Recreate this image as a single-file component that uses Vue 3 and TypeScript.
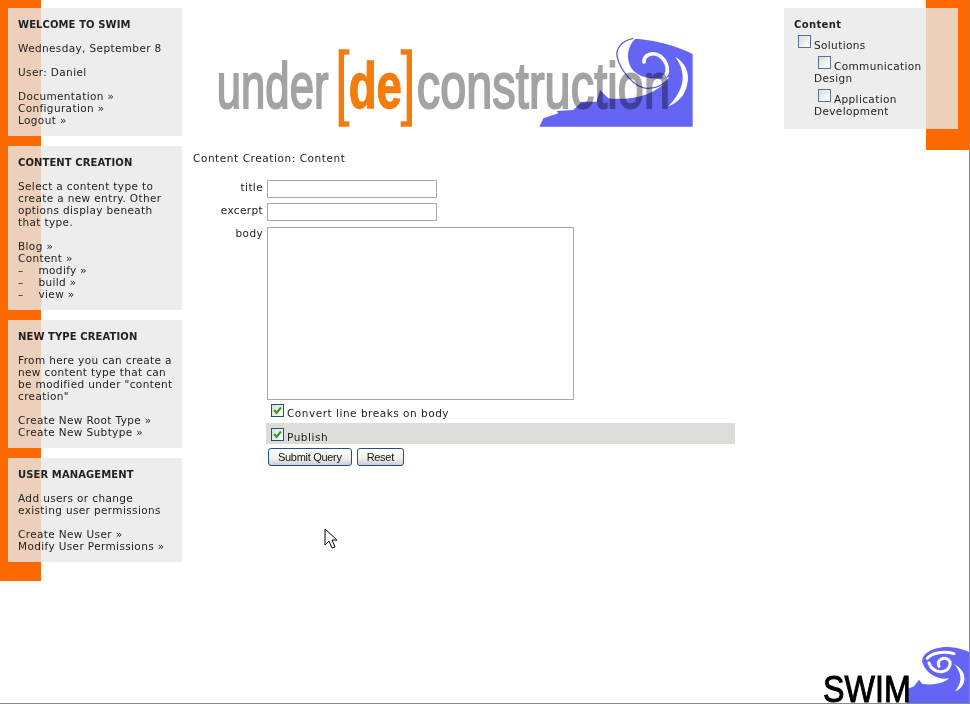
<template>
  <div class="page">
    <div class="bar bar-left"></div>
    <div class="bar bar-right"></div>

    <aside class="side">
      <section v-for="box in boxes" :key="box.title" class="box">
        <h3>{{ box.title }}</h3>
        <p v-for="(para, i) in box.paras" :key="i">
          <span v-for="line in para" :key="line" class="line">{{ line }}</span>
        </p>
      </section>
    </aside>

    <main class="main">
      <!-- viewBox is 3x so the wave points can be read straight off a zoomed crop -->
      <svg class="logo" width="500" height="110" viewBox="0 0 1500 330">
        <g transform="translate(1200 12)">
          <path class="wave" d="M-182 278 L-170 253 L-125 238 L-130 231 L-80 228 L-55 203 L-10 203 L0 168 L25 193 C90 200 170 185 212 128 C170 140 110 135 90 95 C78 65 85 35 105 15 C150 15 230 35 278 60 V278 Z" />
          <path class="wave-line" d="M100 13 C65 20 45 45 52 70 C60 105 100 160 140 163 C170 165 195 150 215 125" />
          <path class="wave-ring" d="M132 84 C130 62 160 52 180 66 C205 85 208 118 192 128" />
          <path class="wave-cut" d="M225 68 C255 85 270 115 262 150 C255 185 235 205 205 217 C230 190 250 160 248 125 C245 100 238 85 225 68 Z" />
        </g>
        <text x="50" y="234" class="word grey" textLength="336" lengthAdjust="spacingAndGlyphs">under</text>
        <path class="bracket" d="M448 66 H424 V282 H448" />
        <text x="446" y="234" class="word orange" textLength="160" lengthAdjust="spacingAndGlyphs">de</text>
        <path class="bracket" d="M602 66 H628 V282 H602" />
        <text x="650" y="234" class="word grey" textLength="760" lengthAdjust="spacingAndGlyphs">construction</text>
      </svg>

      <div class="crumb">Content Creation: Content</div>

      <form class="form" @submit.prevent>
        <label class="lbl">title</label>
        <input class="field" type="text" />
        <label class="lbl">excerpt</label>
        <input class="field" type="text" />
        <label class="lbl">body</label>
        <textarea class="field area"></textarea>

        <div class="check-row plain">
          <span class="check"><svg width="9" height="9" viewBox="0 0 9 9"><path d="M1 4 L3.5 7 L8 1.5" /></svg></span>
          <span class="check-text">Convert line breaks on body</span>
        </div>
        <div class="check-row shaded">
          <span class="check"><svg width="9" height="9" viewBox="0 0 9 9"><path d="M1 4 L3.5 7 L8 1.5" /></svg></span>
          <span class="check-text">Publish</span>
        </div>
        <div class="buttons">
          <button type="submit">Submit Query</button>
          <button type="reset">Reset</button>
        </div>
      </form>
    </main>

    <aside class="side-right">
      <section class="box tree">
        <h4>Content</h4>
        <div v-for="node in tree" :key="node.label" class="node" :class="{ sub: node.sub }">
          <span class="tick"></span>{{ node.label }}
        </div>
      </section>
    </aside>

    <svg class="cursor" width="14" height="22" viewBox="0 0 14 22">
      <path d="M1 1 V17 L5 13 L8 20 L11 19 L8 12 L13 12 Z" />
    </svg>

    <svg class="swim" width="146" height="64" viewBox="0 0 438 192">
      <g transform="translate(228 0)">
        <path class="wave" d="M25 192 V150 L45 142 L60 122 L70 135 C110 140 140 130 150 118 C120 125 80 105 70 70 C65 50 90 30 130 25 C160 22 190 30 212 40 V192 Z" />
        <path class="wave-ring thin" d="M85 58 C100 40 135 36 165 44" />
        <path class="wave-ring thin" d="M120 82 C112 62 135 52 148 62 C160 74 150 96 128 98 C110 100 95 88 90 72" />
        <path class="wave-cut" d="M165 75 C185 85 200 105 196 125 C192 142 182 152 168 157 C180 142 186 128 184 112 C182 98 175 85 165 75 Z" />
      </g>
      <text x="0" y="188" class="logo-word" textLength="264" lengthAdjust="spacingAndGlyphs">SWIM</text>
    </svg>
  </div>
</template>

<script setup lang="ts">
interface Box {
  title: string;
  paras: string[][];
}

const boxes: Box[] = [
  {
    title: "WELCOME TO SWIM",
    paras: [
      ["Wednesday, September 8"],
      ["User: Daniel"],
      ["Documentation »", "Configuration »", "Logout »"],
    ],
  },
  {
    title: "CONTENT CREATION",
    paras: [
      ["Select a content type to", "create a new entry. Other", "options display beneath", "that type."],
      ["Blog »", "Content »", "–    modify »", "–    build »", "–    view »"],
    ],
  },
  {
    title: "NEW TYPE CREATION",
    paras: [
      ["From here you can create a", "new content type that can", "be modified under \"content", "creation\""],
      ["Create New Root Type »", "Create New Subtype »"],
    ],
  },
  {
    title: "USER MANAGEMENT",
    paras: [
      ["Add users or change", "existing user permissions"],
      ["Create New User »", "Modify User Permissions »"],
    ],
  },
];

const tree = [
  { label: "Solutions", sub: false },
  { label: "Communication Design", sub: true },
  { label: "Application Development", sub: true },
];
</script>

<style>
html, body {
  margin: 0;
  background: #fff;
}
</style>

<style scoped>
.page {
  position: relative;
  width: 970px;
  height: 704px;
  overflow: hidden;
  display: flex;
  align-items: flex-start;
  box-sizing: border-box;
  padding: 8px 11px 0 8px;
  font: 10.5px/12px "DejaVu Sans", Verdana, sans-serif;
  letter-spacing: 0.37px;
  color: #222;
  border-bottom: 1px solid #8a8a8a;
  border-right: 1px solid #8a8a8a;
}

.bar {
  position: absolute;
  top: 0;
  background: #ff6a00;
}

.bar-left {
  left: 0;
  width: 41px;
  height: 581px;
}

.bar-right {
  right: -1px;
  width: 44px;
  height: 150px;
}

.side {
  position: relative;
  width: 174px;
  flex: none;
  display: flex;
  flex-direction: column;
  gap: 10px;
}

/* translucent so the orange bars show through as the peach strip */
.box {
  background: rgba(232, 232, 232, 0.805);
  box-sizing: border-box;
  padding: 11px 10px 10px;
}

h3 {
  margin: 0 0 -1px;
  font-size: 10px;
  line-height: 12px;
  font-weight: bold;
  letter-spacing: 0.1px;
}

p {
  margin: 12px 0 0;
}

.line {
  display: block;
  white-space: pre;
}

.main {
  flex: none;
  width: 591px;
  margin-left: 11px;
}

.logo {
  display: block;
  margin: 22px 0 0 7px;
  overflow: visible;
}

.word {
  font: 192px "Liberation Sans Narrow", "Liberation Sans", sans-serif;
  mix-blend-mode: multiply;
}

.grey {
  fill: #a3a3a3;
  stroke: #a3a3a3;
  stroke-width: 6;
}

.orange {
  fill: #f57c0a;
  stroke: #f57c0a;
  stroke-width: 4;
  font-weight: bold;
}

.bracket {
  fill: none;
  stroke: #f57c0a;
  stroke-width: 16;
}

.wave {
  fill: #6464f5;
}

.wave-line {
  fill: none;
  stroke: #5a5ae0;
  stroke-width: 4;
}

.wave-ring {
  fill: none;
  stroke: #fff;
  stroke-width: 11;
  stroke-linecap: round;
}

.wave-ring.thin {
  stroke-width: 9;
}

.wave-cut {
  fill: #fff;
}

.crumb {
  margin-top: 12px;
  letter-spacing: 0.57px;
}

.form {
  display: grid;
  grid-template-columns: 70px auto;
  justify-content: start;
  margin-top: 16px;
  row-gap: 5px;
  column-gap: 4px;
}

.lbl {
  text-align: right;
  padding-top: 1px;
}

.field {
  box-sizing: border-box;
  width: 170px;
  height: 18px;
  margin: 0;
  border: 1px solid #a8a8a8;
  background: #fff;
  padding: 0;
  display: block;
}

.area {
  width: 307px;
  height: 173px;
  margin-top: 1px;
  resize: none;
}

.check-row {
  grid-column: 2;
  display: flex;
  align-items: flex-start;
  gap: 3px;
  padding-left: 5px;
  width: 469px;
  box-sizing: border-box;
  margin-left: -1px;
}

.check-text {
  letter-spacing: 0.52px;
}

.plain {
  height: 20px;
  margin-top: -5px;
}

.plain .check {
  margin-top: 4px;
}

.plain .check-text {
  margin-top: 7px;
}

.shaded {
  background: #dcdcd8;
  height: 21px;
  margin-top: -2px;
}

.shaded .check {
  margin-top: 5px;
}

.shaded .check-text {
  margin-top: 8px;
}

.check {
  width: 13px;
  height: 13px;
  box-sizing: border-box;
  border: 1px solid #1c5180;
  background: linear-gradient(135deg, #dcdcd7, #fff);
  display: flex;
  align-items: center;
  justify-content: center;
}

.check path {
  fill: none;
  stroke: #21a121;
  stroke-width: 2;
}

.buttons {
  grid-column: 2;
  display: flex;
  gap: 5px;
  padding-left: 1px;
  margin-top: -1px;
}

button {
  height: 18px;
  box-sizing: border-box;
  padding: 0 9px;
  border: 1px solid #1f4f86;
  border-radius: 3px;
  background: linear-gradient(to bottom, #fff, #f0f0ea 60%, #c8cde0);
  font: 11px "Liberation Sans", Arial, sans-serif;
  letter-spacing: -0.3px;
  color: #111;
}

.side-right {
  position: relative;
  flex: none;
  margin-left: auto;
  width: 174px;
}

.tree {
  padding: 11px 10px 6px;
  height: 121px;
}

h4 {
  margin: 0;
  font-size: 10px;
  line-height: 12px;
  font-weight: bold;
}

.node {
  margin-top: 4px;
}

.node:first-of-type {
  margin-top: 5px;
}

.node.sub {
  padding-left: 20px;
  margin-top: 6px;
}

.tick {
  display: inline-block;
  position: relative;
  top: -1px;
  width: 13px;
  height: 13px;
  box-sizing: border-box;
  border: 1px solid #5a7096;
  background: linear-gradient(135deg, #dcdcd7, #fff);
  margin: 0 3px 0 4px;
}

.cursor {
  position: absolute;
  left: 324px;
  top: 528px;
}

.cursor path {
  fill: #fff;
  stroke: #000;
  stroke-width: 1;
}

.swim {
  position: absolute;
  right: 0;
  bottom: 0;
}

.logo-word {
  font: 112px "Liberation Sans", sans-serif;
  fill: #000;
  stroke: #000;
  stroke-width: 3;
  mix-blend-mode: multiply;
}
</style>
